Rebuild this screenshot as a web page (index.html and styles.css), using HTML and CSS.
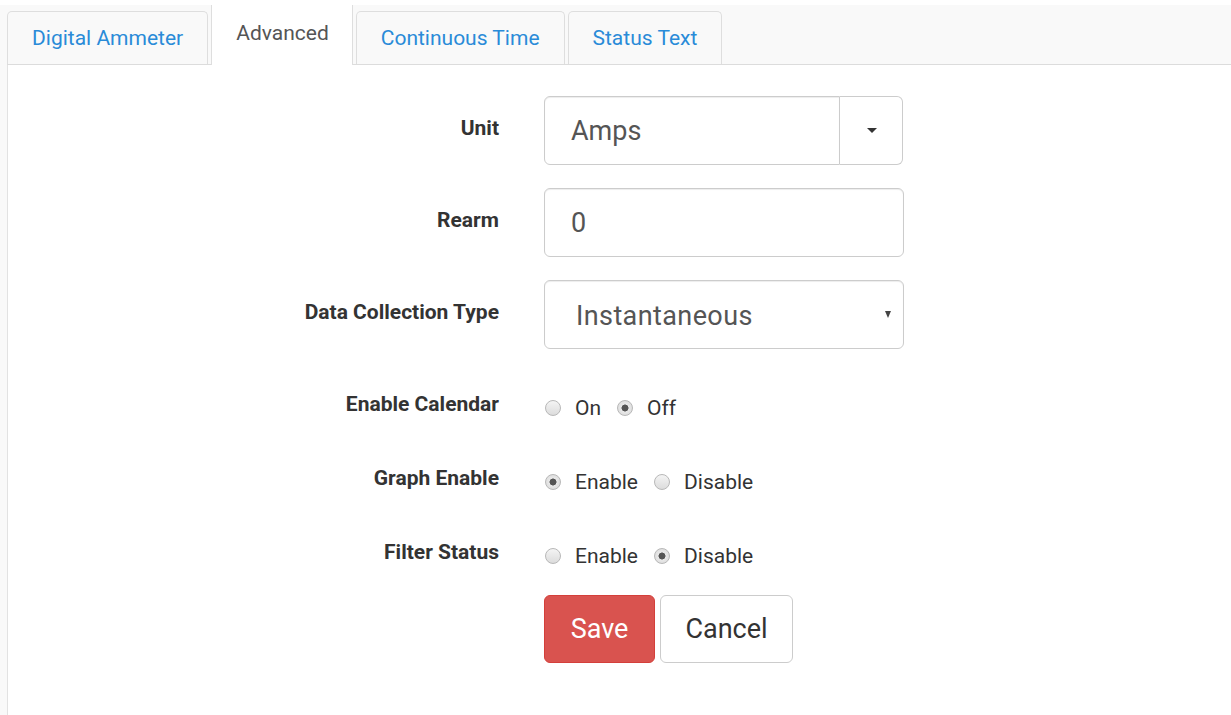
FILE: index.html
```html
<!DOCTYPE html>
<html lang="en">
<head>
<meta charset="utf-8">
<title>Advanced settings</title>
<link rel="stylesheet" href="styles.css">
</head>
<body>
<div class="page">
  <ul class="tabs">
    <li class="tab"><a href="#">Digital Ammeter</a></li>
    <li class="tab tab-active">Advanced</li>
    <li class="tab"><a href="#">Continuous Time</a></li>
    <li class="tab"><a href="#">Status Text</a></li>
  </ul>

  <div class="panel">
    <form class="form">
      <div class="row">
        <label class="label">Unit</label>
        <div class="control">
          <div class="input-group">
            <input class="field field-grouped" type="text" value="Amps">
            <button class="addon" type="button"><span class="caret"></span></button>
          </div>
        </div>
      </div>

      <div class="row">
        <label class="label">Rearm</label>
        <div class="control">
          <input class="field" type="text" value="0">
        </div>
      </div>

      <div class="row">
        <label class="label">Data Collection Type</label>
        <div class="control">
          <div class="select-wrap">
            <select class="field field-select">
              <option>Instantaneous</option>
              <option>Average</option>
            </select>
          </div>
        </div>
      </div>

      <div class="row row-radio">
        <label class="label">Enable Calendar</label>
        <div class="control options">
          <label class="option"><input type="radio" name="calendar"><span>On</span></label>
          <label class="option"><input type="radio" name="calendar" checked><span>Off</span></label>
        </div>
      </div>

      <div class="row row-radio">
        <label class="label">Graph Enable</label>
        <div class="control options">
          <label class="option"><input type="radio" name="graph" checked><span>Enable</span></label>
          <label class="option"><input type="radio" name="graph"><span>Disable</span></label>
        </div>
      </div>

      <div class="row row-radio row-last">
        <label class="label">Filter Status</label>
        <div class="control options">
          <label class="option"><input type="radio" name="filter"><span>Enable</span></label>
          <label class="option"><input type="radio" name="filter" checked><span>Disable</span></label>
        </div>
      </div>

      <div class="actions">
        <button class="btn btn-save" type="button">Save</button>
        <button class="btn btn-cancel" type="button">Cancel</button>
      </div>
    </form>
  </div>
</div>
</body>
</html>
```

FILE: styles.css
```css
* {
  box-sizing: border-box;
}

body {
  margin: 0;
  background: #fff;
  font-family: Roboto, "Liberation Sans", Arial, sans-serif;
  color: #333;
}

.page {
  margin-top: 5px;
  height: 710px;
  background: #f9f9f9;
  padding-left: 7px;
  display: flex;
  flex-direction: column;
}

/* tab strip */
.tabs {
  list-style: none;
  margin: 0;
  padding: 0;
  height: 60px;
  display: flex;
  align-items: flex-end;
  gap: 3px;
  border-bottom: 1px solid #dcdcdc;
  flex: none;
}

.tab {
  height: 53px;
  padding: 0 24px;
  display: flex;
  align-items: center;
  border: 1px solid #dedede;
  border-bottom: 0;
  border-radius: 5px 5px 0 0;
  font-size: 21px;
  background: #f9f9f9;
}

.tab a {
  color: #2a8bd8;
  text-decoration: none;
}

.tab-active {
  height: 60px;
  margin-bottom: -1px;
  padding: 0 23px 4px 24px;
  background: #fff;
  border-top: 0;
  border-radius: 0;
  color: #555;
}

/* content */
.panel {
  flex: 1;
  background: #fff;
  border-left: 1px solid #e2e2e2;
  padding-top: 31px;
}

.row {
  display: flex;
  margin-bottom: 23px;
}

.row-last {
  margin-bottom: 24px;
}

.label {
  width: 491px;
  flex: none;
  text-align: right;
  font-weight: 700;
  font-size: 21px;
  line-height: 30px;
  padding-top: 17px;
  color: #333;
}

.control {
  margin-left: 45px;
  width: 360px;
  flex: none;
}

.field {
  display: block;
  width: 100%;
  height: 69px;
  margin: 0;
  padding: 0 26px;
  border: 1px solid #ccc;
  border-radius: 6px;
  background: #fff;
  font-family: Roboto, "Liberation Sans", Arial, sans-serif;
  font-size: 27px;
  color: #555;
  box-shadow: inset 0 1px 1px rgba(0, 0, 0, 0.075);
  outline: none;
}

.input-group {
  display: flex;
}

.field-grouped {
  width: 296px;
  border-radius: 6px 0 0 6px;
}

.addon {
  width: 63px;
  height: 69px;
  margin: 0;
  padding: 0;
  border: 1px solid #ccc;
  border-left: 0;
  border-radius: 0 6px 6px 0;
  background: #fff;
  display: flex;
  align-items: center;
  justify-content: center;
}

.caret {
  width: 0;
  height: 0;
  margin-left: 2px;
  border-top: 5px solid #333;
  border-left: 5px solid transparent;
  border-right: 5px solid transparent;
}

.select-wrap {
  position: relative;
}

.field-select {
  appearance: none;
  -webkit-appearance: none;
  padding: 3px 0 0 31px;
  letter-spacing: 0.4px;
}

/* dropdown arrow drawn over the select's right edge */
.select-wrap::after {
  content: "";
  position: absolute;
  right: 13px;
  top: 31px;
  border-top: 7px solid #444;
  border-left: 3.5px solid transparent;
  border-right: 3.5px solid transparent;
}

/* radio rows */
.row-radio {
  min-height: 51px;
}

.options {
  display: flex;
  align-items: center;
  padding-top: 21px;
  height: 51px;
}

.option {
  display: inline-flex;
  align-items: center;
  margin-right: 15px;
  font-size: 21px;
  line-height: 30px;
  color: #333;
}

.option input {
  appearance: none;
  -webkit-appearance: none;
  width: 16px;
  height: 16px;
  margin: 0 14px 0 1px;
  border-radius: 50%;
  border: 1px solid #b8b8b8;
  background: linear-gradient(#f4f4f4, #dcdcdc);
}

.option input:checked {
  background: radial-gradient(circle, #555 0 3.2px, #e9e9e9 3.8px, #d6d6d6 100%);
}

/* buttons */
.actions {
  display: flex;
  gap: 5px;
  margin-left: 536px;
}

.btn {
  height: 68px;
  padding: 0;
  border-radius: 6px;
  border: 1px solid #ccc;
  font-family: Roboto, "Liberation Sans", Arial, sans-serif;
  font-size: 27px;
  cursor: pointer;
}

.btn-save {
  width: 111px;
  background: #d9534f;
  border-color: #d43f3a;
  color: #fff;
}

.btn-cancel {
  width: 133px;
  background: #fff;
  color: #333;
}
```
